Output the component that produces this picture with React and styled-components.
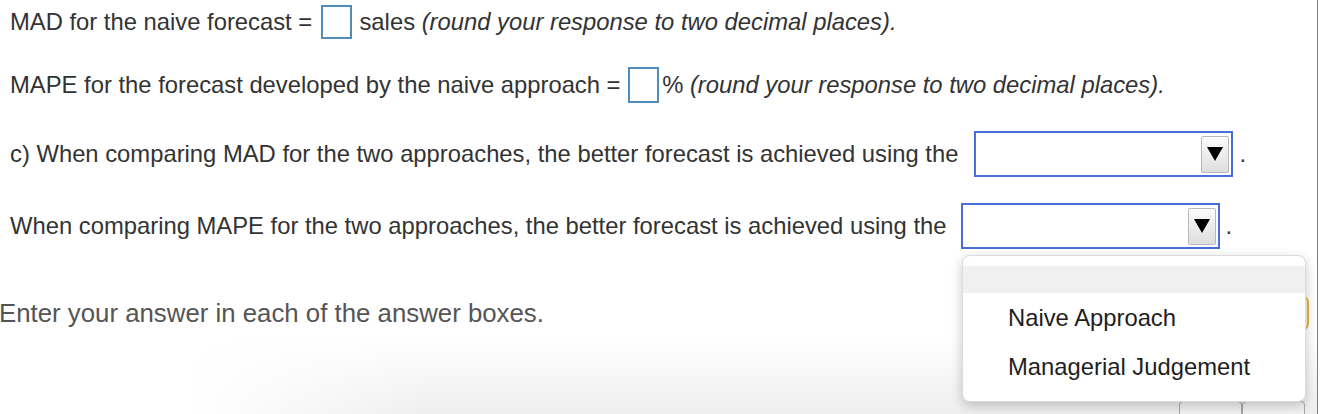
import React from 'react';
import styled, { createGlobalStyle } from 'styled-components';

const GlobalStyle = createGlobalStyle`
  body {
    margin: 0;
    background: #fff;
    font-family: "Liberation Sans", Arial, sans-serif;
  }
`;

const Page = styled.div`
  position: relative;
  display: flex;
  width: 1324px;
  height: 414px;
  overflow: hidden;
  background: #fff;
`;

const Main = styled.main`
  display: flex;
  flex-direction: column;
  width: 1317px;
`;

const VerticalRule = styled.div`
  width: 1px;
  background: #7d7d7d;
`;

const Gutter = styled.div`
  flex: 1;
  background: #fff;
`;

const Questions = styled.section`
  padding-left: 10px;
  font-size: 23.8px;
  color: #333;
`;

const Row = styled.div`
  display: flex;
  align-items: center;
  height: ${(p) => p.$height}px;
  margin-top: ${(p) => p.$top}px;
  white-space: pre;
`;

const Hint = styled.em`
  font-style: italic;
`;

const AnswerBox = styled.span`
  display: inline-block;
  box-sizing: border-box;
  width: 31px;
  height: ${(p) => p.$height || 34}px;
  margin: 0 ${(p) => p.$after}px 0 ${(p) => p.$before}px;
  border: 2px solid #4f8dbd;
  background: #fff;
`;

const Select = styled.div`
  display: flex;
  align-items: center;
  justify-content: flex-end;
  box-sizing: border-box;
  width: 259px;
  height: 46px;
  margin: 0 6px 0 ${(p) => p.$left}px;
  padding-right: 2px;
  border: 2px solid #4a6ddb;
  background: #fff;
`;

const ArrowButton = styled.span`
  display: flex;
  align-items: center;
  justify-content: center;
  box-sizing: border-box;
  width: 28px;
  height: 37px;
  border: 1px solid #b9b9b9;
  border-radius: 2px;
  background: linear-gradient(#fbfbfb, #dedede);
`;

const Instruction = styled.div`
  display: flex;
  align-items: center;
  justify-content: space-between;
  height: 30px;
  margin-top: 49px;
  margin-left: -1px;
  padding-right: 8px;
  font-size: 25.8px;
  color: #555;
`;

const CheckButton = styled.span`
  width: 120px;
  height: 34px;
  box-sizing: border-box;
  border: 2px solid #e3b44a;
  border-radius: 6px;
  background: #fdf5e0;
`;

const Separator = styled.hr`
  margin: 9px 0 0;
  border: 0;
  height: 2px;
  background: #cfd3de;
`;

const Footer = styled.footer`
  flex: 1;
  display: flex;
  justify-content: flex-end;
  align-items: flex-start;
  padding: 64px 12px 0 0;
  background: linear-gradient(to right, #fff 190px, rgba(255, 255, 255, 0) 430px),
    linear-gradient(#fff, #ebebeb);
`;

const FooterButton = styled.span`
  width: 63px;
  height: 30px;
  box-sizing: border-box;
  border: 1px solid #a9a9a9;
  border-radius: 4px 4px 0 0;
  background: #f3f3f3;
`;

const Menu = styled.ul`
  position: absolute;
  left: 962px;
  top: 255px;
  width: 344px;
  margin: 0;
  padding: 10px 0;
  box-sizing: border-box;
  list-style: none;
  background: #fff;
  border: 1px solid #dcdcdc;
  border-radius: 8px;
  box-shadow: 0 4px 12px rgba(0, 0, 0, 0.22);
  font-size: 23.8px;
  color: #1e1e1e;
`;

const Option = styled.li`
  display: flex;
  align-items: center;
  height: ${(p) => (p.$blank ? 27 : 49)}px;
  padding-left: 45px;
  background: ${(p) => (p.$active ? '#f0f0f0' : 'transparent')};
`;

const Arrow = () => (
  <svg width="16" height="16" viewBox="0 0 16 16">
    <path d="M0 1 H16 L8 15 Z" fill="#000" />
  </svg>
);

const Dropdown = ({ left }) => (
  <>
    <Select $left={left}>
      <ArrowButton>
        <Arrow />
      </ArrowButton>
    </Select>
    .
  </>
);

export default function App() {
  return (
    <Page>
      <GlobalStyle />
      <Main>
        <Questions>
          <Row $top={5} $height={34}>
            MAD for the naive forecast ={' '}
            <AnswerBox $before={2} $after={1} /> sales{' '}
            <Hint>(round your response to two decimal places).</Hint>
          </Row>
          <Row $top={28} $height={36}>
            MAPE for the forecast developed by the naive approach ={' '}
            <AnswerBox $height={36} $before={1} $after={3} />%{' '}
            <Hint>(round your response to two decimal places).</Hint>
          </Row>
          <Row $top={28} $height={46}>
            c) When comparing MAD for the two approaches, the better forecast is achieved using the
            <Dropdown left={16} />
          </Row>
          <Row $top={26} $height={46}>
            When comparing MAPE for the two approaches, the better forecast is achieved using the
            <Dropdown left={14} />
          </Row>
        </Questions>
        <Instruction>
          Enter your answer in each of the answer boxes.
          <CheckButton />
        </Instruction>
        <Separator />
        <Footer>
          <FooterButton />
          <FooterButton />
        </Footer>
      </Main>
      <VerticalRule />
      <Gutter />
      <Menu>
        <Option $blank $active />
        <Option>Naive Approach</Option>
        <Option>Managerial Judgement</Option>
      </Menu>
    </Page>
  );
}
